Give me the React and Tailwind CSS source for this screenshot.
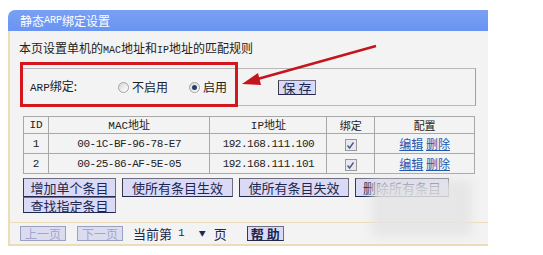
import React from 'react'

const cjk = { fontFamily: '"Noto Sans CJK SC", "Noto Sans", sans-serif' }
const mono = { fontFamily: '"Liberation Mono", "Noto Sans CJK SC", monospace' }

const rows = [
  { id: 1, mac: '00-1C-BF-96-78-E7', ip: '192.168.111.100' },
  { id: 2, mac: '00-25-86-AF-5E-05', ip: '192.168.111.101' },
]

function Radio({ checked }) {
  return (
    <span className="inline-flex w-[11px] h-[11px] rounded-full border border-[#a4a4a4] bg-gradient-to-br from-[#d8d8d8] to-white items-center justify-center">
      {checked && <span className="w-[5px] h-[5px] rounded-full bg-[#2a3a6a]" />}
    </span>
  )
}

function Check() {
  return (
    <span className="inline-flex w-[12px] h-[12px] border border-[#9a9a9a] bg-[#e8e8ee] items-center justify-center">
      <svg width="9" height="9" viewBox="0 0 9 9">
        <path d="M1.5 4.5 L3.6 7 L7.5 1.5" fill="none" stroke="#4a5a8a" strokeWidth="1.4" />
      </svg>
    </span>
  )
}

function Btn({ children, className = '' }) {
  return (
    <div
      className={`flex items-center justify-center bg-[#dadaf6] border border-[#6e6e80] border-l-[#3a3a4a] border-b-[#22284a] text-[13px] text-[#1c2850] leading-none ${className}`}
    >
      {children}
    </div>
  )
}

const cell = 'border border-[#a8a8a8] p-0 leading-[14px]'

export default function App() {
  return (
    <div className="relative w-[543px] h-[255px] bg-white overflow-hidden" style={cjk}>
      <div className="ml-[8px] mt-[10px] w-[480px]">
        <div className="h-[21px] rounded-tl-[7px] bg-gradient-to-b from-[#7aa0f4] to-[#6a94f2] flex items-center pl-[12px] text-[12px] text-white">
          静态<span className="text-[10px]" style={mono}>ARP</span>绑定设置
        </div>
        <div className="bg-[#f3f3f3] border-l-2 border-b-2 border-[#ecdcb8]">
          <div className="pt-[9px] pl-[9px] text-[12px] leading-[16px] text-[#222]">
            本页设置单机的<span className="text-[10px]" style={mono}>MAC</span>地址和<span className="text-[10px]" style={mono}>IP</span>地址的匹配规则
          </div>

          <div className="ml-[10px] mt-[9px] w-[456px] h-[38px] border border-[#b8b8b8] border-r-[#a0a0a0] flex items-center text-[12px] text-[#222]">
            <span className="ml-[9px] w-[82px]"><span className="text-[11px]" style={mono}>ARP</span>绑定:</span>
            <span className="ml-[6px] flex items-center gap-[3px]"><Radio />不启用</span>
            <span className="ml-[21px] flex items-center gap-[3px]"><Radio checked />启用</span>
            <Btn className="ml-[51px] w-[38px] h-[15px] text-[12px] tracking-[3px] pl-[3px]">保存</Btn>
          </div>

          <table className="ml-[13px] mt-[10px] w-[452px] border-collapse text-[11px] text-[#222] text-center">
            <thead>
              <tr className="h-[17px]">
                <th className={`w-[25px] font-normal ${cell}`} style={mono}>ID</th>
                <th className={`w-[162px] font-normal ${cell}`}><span style={mono}>MAC</span>地址</th>
                <th className={`w-[117px] font-normal ${cell}`}><span style={mono}>IP</span>地址</th>
                <th className={`w-[48px] font-normal ${cell}`}>绑定</th>
                <th className={`w-[100px] font-normal ${cell}`}>配置</th>
              </tr>
            </thead>
            <tbody>
              {rows.map((r) => (
                <tr key={r.id} className="h-[20px]">
                  <td className={cell} style={mono}>{r.id}</td>
                  <td className={`tracking-[-0.5px] ${cell}`} style={mono}>{r.mac}</td>
                  <td className={`tracking-[-0.5px] ${cell}`} style={mono}>{r.ip}</td>
                  <td className={cell}><span className="inline-flex align-middle"><Check /></span></td>
                  <td className={`text-[12px] text-[#1f58b0] ${cell}`}>
                    <span className="underline">编辑</span> <span className="underline">删除</span>
                  </td>
                </tr>
              ))}
            </tbody>
          </table>

          <div className="ml-[13px] mt-[4px]">
            <div className="flex gap-[6px]">
              <Btn className="w-[93px] h-[19px]">增加单个条目</Btn>
              <Btn className="w-[111px] h-[19px]">使所有条目生效</Btn>
              <Btn className="w-[110px] h-[19px]">使所有条目失效</Btn>
              <Btn className="w-[94px] h-[19px]">删除所有条目</Btn>
            </div>
            <Btn className="w-[93px] h-[16px]">查找指定条目</Btn>
          </div>

          <div className="mt-[9px] border-t border-[#ecdcb8]" />

          <div className="flex items-center h-[21px] pl-[10px] text-[13px] text-[#1c2850]">
            <div className="w-[46px] h-[15px] flex items-center justify-center bg-[#dcdcf0] border border-[#9aa0c0] text-[12px] text-[#a0a6cc]">上一页</div>
            <div className="ml-[11px] w-[46px] h-[15px] flex items-center justify-center bg-[#dcdcf0] border border-[#9aa0c0] text-[12px] text-[#a0a6cc]">下一页</div>
            <span className="ml-[10px]">当前第</span>
            <span className="ml-[6px] text-[11px]" style={mono}>1</span>
            <span className="ml-[14px] text-[7px]">▼</span>
            <span className="ml-[8px]">页</span>
            <Btn className="ml-[20px] w-[37px] h-[15px] tracking-[3px] pl-[3px] font-bold">帮助</Btn>
          </div>
        </div>
      </div>

      {/* annotation overlay */}
      <div className="absolute left-[20px] top-[62px] w-[218px] h-[45px] border-[3px] border-[#d4161e]" />
      <svg className="absolute left-0 top-0" width="543" height="255">
        <line x1="376" y1="46" x2="254" y2="80" stroke="#c4141c" strokeWidth="2.5" />
        <polygon points="242,84 258,73 261,85" fill="#c4141c" />
      </svg>

      {/* watermark smudge */}
      <div className="absolute left-[372px] top-[180px] w-[100px] h-[56px] bg-[#e4e4e4]/85 blur-[5px]" />
    </div>
  )
}
